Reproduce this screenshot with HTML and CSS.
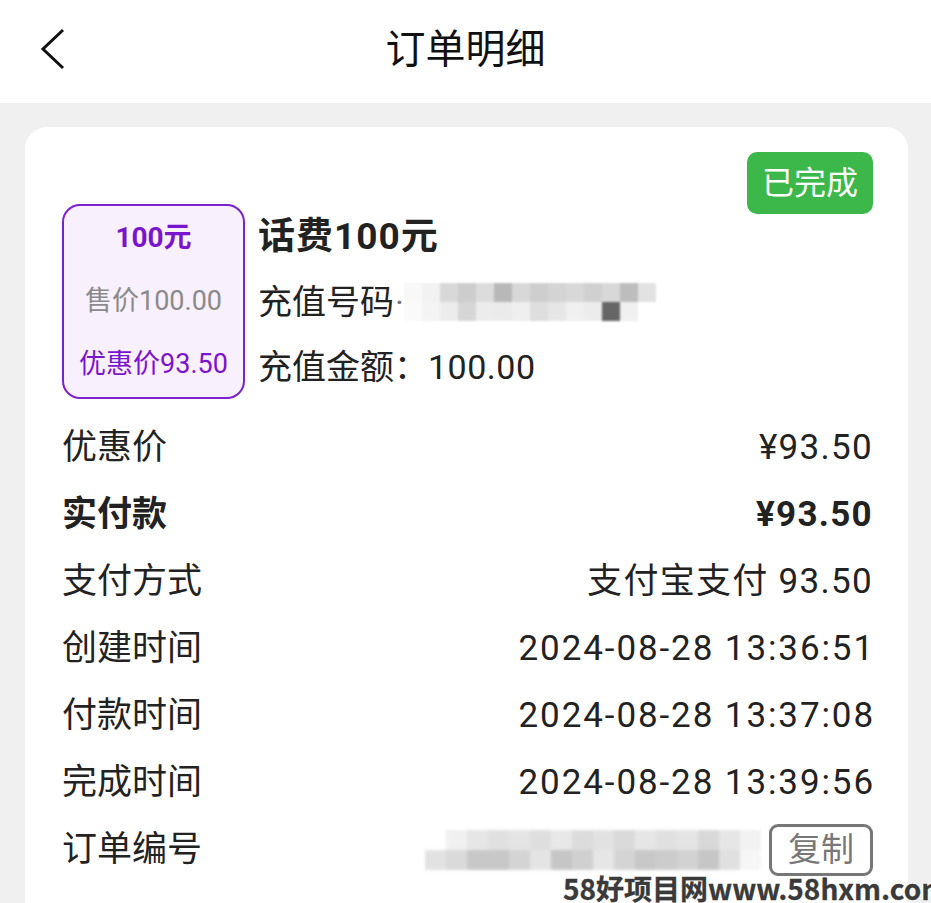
FILE: index.html
```html
<!DOCTYPE html>
<html lang="zh">
<head>
<meta charset="utf-8">
<link rel="stylesheet" href="styles.css">
</head>
<body>
<header class="topbar">
  <svg class="back" width="30" height="44" viewBox="0 0 30 44"><path d="M25 3 L5 22 L25 41" fill="none" stroke="#111" stroke-width="3" stroke-linejoin="miter"/></svg>
  <h1 class="title">订单明细</h1>
</header>
<main class="page">
  <section class="card">
    <div class="badge-row"><span class="badge">已完成</span></div>
    <div class="product">
      <div class="coupon">
        <div class="c-face">100元</div>
        <div class="c-sale">售价100.00</div>
        <div class="c-disc">优惠价93.50</div>
      </div>
      <div class="info">
        <div class="p-name">话费100元</div>
        <div class="p-line">充值号码<span class="dot">·</span>
          <span class="blur blur-phone">
            <span class="brow"><i style="background:#f8f8f8"></i><i style="background:#f2f2f2"></i><i style="background:#d8d8d8"></i><i style="background:#cdcdcd"></i><i style="background:#dcdcdc"></i><i style="background:#b8b8b8"></i><i style="background:#d8d8d8"></i><i style="background:#cecece"></i><i style="background:#d4d4d4"></i><i style="background:#d8d8d8"></i><i style="background:#d0d0d0"></i><i style="background:#d8d8d8"></i><i style="background:#bdbdbd"></i><i style="background:#e2e2e2"></i></span>
            <span class="brow"><i style="background:#fafafa"></i><i style="background:#f4f4f4"></i><i style="background:#ececec"></i><i style="background:#d6d6d6"></i><i style="background:#ececec"></i><i style="background:#ebebeb"></i><i style="background:#efefef"></i><i style="background:#dedede"></i><i style="background:#e6e6e6"></i><i style="background:#f0f0f0"></i><i style="background:#ececec"></i><i style="background:#666"></i><i style="background:#f0f0f0"></i><i style="background:#fff"></i></span>
          </span>
        </div>
        <div class="p-line">充值金额：<span class="num">100.00</span></div>
      </div>
    </div>
    <div class="rows">
      <div class="row"><span>优惠价</span><span class="val">¥93.50</span></div>
      <div class="row strong"><span>实付款</span><span class="val">¥93.50</span></div>
      <div class="row"><span>支付方式</span><span class="val">支付宝支付 93.50</span></div>
      <div class="row"><span>创建时间</span><span class="val date">2024-08-28 13:36:51</span></div>
      <div class="row"><span>付款时间</span><span class="val date">2024-08-28 13:37:08</span></div>
      <div class="row"><span>完成时间</span><span class="val date">2024-08-28 13:39:56</span></div>
      <div class="row order"><span>订单编号</span>
        <span class="order-right">
          <span class="blur blur-order">
            <span class="brow"><i style="background:#fff"></i><i style="background:#f0f0f0"></i><i style="background:#e6e6e6"></i><i style="background:#e0e0e0"></i><i style="background:#e4e4e4"></i><i style="background:#dedede"></i><i style="background:#e8e8e8"></i><i style="background:#dcdcdc"></i><i style="background:#e2e2e2"></i><i style="background:#dadada"></i><i style="background:#e6e6e6"></i><i style="background:#e0e0e0"></i><i style="background:#e4e4e4"></i><i style="background:#d8d8d8"></i><i style="background:#e6e6e6"></i><i style="background:#f2f2f2"></i></span>
            <span class="brow"><i style="background:#e2e2e2"></i><i style="background:#dadada"></i><i style="background:#c8c8c8"></i><i style="background:#c8c8c8"></i><i style="background:#d4d4d4"></i><i style="background:#e4e4e4"></i><i style="background:#c6c6c6"></i><i style="background:#d0d0d0"></i><i style="background:#e6e6e6"></i><i style="background:#d4d4d4"></i><i style="background:#c8c8c8"></i><i style="background:#cccccc"></i><i style="background:#d2d2d2"></i><i style="background:#c6c6c6"></i><i style="background:#e0e0e0"></i><i style="background:#f6f6f6"></i></span>
          </span>
          <span class="copy">复制</span>
        </span>
      </div>
    </div>
  </section>
</main>
<div class="watermark">58好项目网www.58hxm.com</div>
</body>
</html>
```
FILE: styles.css
```css
* { box-sizing: border-box; }
html, body { margin: 0; padding: 0; }
body {
  width: 931px;
  height: 903px;
  overflow: hidden;
  background: #f0f0f0;
  font-family: Roboto, "Noto Sans CJK SC", sans-serif;
  color: #222;
  position: relative;
}
.topbar {
  height: 103px;
  background: #fff;
  display: flex;
  align-items: center;
  justify-content: center;
  position: relative;
}
.back { position: absolute; left: 38px; top: 27px; }
.title {
  margin: 0;
  font-size: 40px;
  font-weight: 400;
  color: #111;
  transform: translate(0, -6px);
}
.page { padding: 24px 23px 0 25px; }
.card {
  background: #fff;
  border-radius: 22px;
  padding: 25px 35px 40px 37px;
  height: 820px;
}
.badge-row { display: flex; justify-content: flex-end; height: 62px; }
.badge {
  background: #3cb84a;
  color: #fff;
  font-size: 32px;
  line-height: 62px;
  height: 62px;
  padding: 0 15px;
  border-radius: 10px;
}
.product { display: flex; gap: 13px; margin-top: -10px; }
.coupon {
  width: 183px;
  height: 195px;
  border: 2px solid #7b22cc;
  border-radius: 18px;
  background: #f8f0fd;
  display: flex;
  flex-direction: column;
  align-items: center;
  padding-top: 12px;
}
.c-face { font-size: 28px; font-weight: 700; color: #7b14cf; line-height: 40px; }
.c-sale { font-size: 27px; color: #8a8a8a; line-height: 40px; margin-top: 23px; }
.c-disc { font-size: 27px; color: #7b14cf; line-height: 40px; margin-top: 23px; }
.info { display: flex; flex-direction: column; padding-top: 11px; }
.p-name { font-size: 37px; font-weight: 700; color: #222; line-height: 44px; letter-spacing: 1px; }
.p-line { font-size: 34px; line-height: 44px; margin-top: 21px; display: flex; align-items: center; color: #222; }
.num { letter-spacing: 0.5px; }
.dot { color: #777; margin-left: 1px; }
.blur { display: flex; flex-direction: column; }
.brow { display: flex; }
.brow i { display: block; width: 18px; height: 19px; }
.blur-phone { filter: blur(1px); }
.rows { margin-top: 15px; }
.row {
  display: flex;
  justify-content: space-between;
  align-items: baseline;
  height: 67px;
  line-height: 67px;
  font-size: 35px;
  color: #222;
}
.row.order { align-items: center; }
.row.strong { font-weight: 700; }
.val { font-size: 35px; letter-spacing: 1.3px; }
.val.date { letter-spacing: 1.9px; margin-right: -2px; }
.order-right { display: flex; align-items: center; line-height: 44px; }
.blur-order { margin-right: 8px; filter: blur(1.5px); }
.blur-order .brow i { width: 21px; height: 20px; }
.copy {
  border: 3px solid #777;
  border-radius: 9px;
  color: #777;
  font-size: 33px;
  line-height: 45px;
  padding: 0 16px;
  height: 52px;
}
.watermark {
  position: absolute;
  left: 563px;
  bottom: -2px;
  white-space: nowrap;
  font-size: 28px;
  font-weight: 700;
  color: #3a3a3a;
  font-family: "Noto Sans CJK SC", "DejaVu Sans", sans-serif;
  -webkit-text-stroke: 0.3px #3a3a3a;
  text-shadow: 0 0 3px #fff, 0 0 3px #fff;
  line-height: 34px;
}
```
